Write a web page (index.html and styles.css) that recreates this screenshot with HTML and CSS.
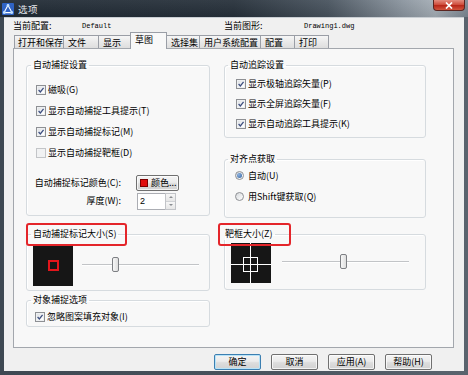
FILE: index.html
```html
<!DOCTYPE html>
<html lang="zh-CN">
<head>
<meta charset="utf-8">
<title>选项</title>
<link rel="stylesheet" href="styles.css">
</head>
<body>
<div class="window">
  <div class="titlebar">
    <svg class="app-icon" width="12" height="12" viewBox="0 0 12 12">
      <rect x="0" y="0" width="12" height="12" rx="1" fill="#2f63c4"/>
      <path d="M6 2.2 L10 9.6 L2 9.6 Z" fill="none" stroke="#ffffff" stroke-width="1.1"/>
      <circle cx="6" cy="2.4" r="1.4" fill="#bfe0ff"/>
      <circle cx="2.3" cy="9.5" r="1.4" fill="#bfe0ff"/>
      <circle cx="9.7" cy="9.5" r="1.4" fill="#bfe0ff"/>
    </svg>
    <span class="title">选项</span>
    <span class="spacer"></span>
    <div class="close">
      <svg width="8" height="7" viewBox="0 0 8 7"><path d="M1 0.5 L7 6.5 M7 0.5 L1 6.5" stroke="#ffffff" stroke-width="1.7"/></svg>
    </div>
  </div>
  <div class="client">
    <div class="info">
      <span class="info-label lbl-profile">当前配置:</span>
      <span class="info-value val-profile">Default</span>
      <span class="info-label lbl-drawing">当前图形:</span>
      <span class="info-value">Drawing1.dwg</span>
    </div>
    <div class="tabs">
      <div class="tab tab-open">打开和保存</div>
      <div class="tab tab-file">文件</div>
      <div class="tab tab-display">显示</div>
      <div class="tab tab-draft active">草图</div>
      <div class="tab tab-select">选择集</div>
      <div class="tab tab-user">用户系统配置</div>
      <div class="tab tab-profile">配置</div>
      <div class="tab tab-print">打印</div>
    </div>
    <div class="panel">
      <div class="col col-left">
        <fieldset class="group">
          <legend class="legend-left">自动捕捉设置</legend>
          <div class="snap-body">
            <div class="check-row snap-check"><span class="cb checked"><svg viewBox="0 0 10 10"><path d="M2 5 L4.2 7.4 L8.2 2.4" fill="none" stroke="#3d4f80" stroke-width="1.6"/></svg></span><span>磁吸(G)</span></div>
            <div class="check-row snap-check"><span class="cb checked"><svg viewBox="0 0 10 10"><path d="M2 5 L4.2 7.4 L8.2 2.4" fill="none" stroke="#3d4f80" stroke-width="1.6"/></svg></span><span>显示自动捕捉工具提示(T)</span></div>
            <div class="check-row snap-check"><span class="cb checked"><svg viewBox="0 0 10 10"><path d="M2 5 L4.2 7.4 L8.2 2.4" fill="none" stroke="#3d4f80" stroke-width="1.6"/></svg></span><span>显示自动捕捉标记(M)</span></div>
            <div class="check-row snap-check"><span class="cb disabled"></span><span>显示自动捕捉靶框(D)</span></div>
            <div class="field-row color-row">
              <span class="field-label">自动捕捉标记颜色(C):</span>
              <div class="btn color-btn"><span class="swatch"></span><span>颜色...</span></div>
            </div>
            <div class="field-row thick-row">
              <span class="field-label">厚度(W):</span>
              <div class="spin">
                <span class="spin-field">2</span>
                <span class="spin-btns"><span class="spin-up"></span><span class="spin-down"></span></span>
              </div>
            </div>
          </div>
        </fieldset>
        <fieldset class="group group-marker">
          <legend class="legend-left mark mark-left">自动捕捉标记大小(S)</legend>
          <div class="preview-row marker-row">
            <svg class="preview" width="40" height="40" viewBox="0 0 40 40">
              <rect width="40" height="40" fill="#161616"/>
              <rect x="16" y="15" width="9" height="9" fill="none" stroke="#e2151b" stroke-width="2"/>
            </svg>
            <div class="slider slider-marker"><span class="thumb"></span></div>
          </div>
        </fieldset>
        <fieldset class="group group-options">
          <legend class="legend-left">对象捕捉选项</legend>
          <div class="options-body">
            <div class="check-row opt-check"><span class="cb checked"><svg viewBox="0 0 10 10"><path d="M2 5 L4.2 7.4 L8.2 2.4" fill="none" stroke="#3d4f80" stroke-width="1.6"/></svg></span><span>忽略图案填充对象(I)</span></div>
          </div>
        </fieldset>
      </div>
      <div class="col col-right">
        <fieldset class="group">
          <legend class="legend-right">自动追踪设置</legend>
          <div class="track-body">
            <div class="check-row track-check"><span class="cb checked"><svg viewBox="0 0 10 10"><path d="M2 5 L4.2 7.4 L8.2 2.4" fill="none" stroke="#3d4f80" stroke-width="1.6"/></svg></span><span>显示极轴追踪矢量(P)</span></div>
            <div class="check-row track-check"><span class="cb checked"><svg viewBox="0 0 10 10"><path d="M2 5 L4.2 7.4 L8.2 2.4" fill="none" stroke="#3d4f80" stroke-width="1.6"/></svg></span><span>显示全屏追踪矢量(F)</span></div>
            <div class="check-row track-check"><span class="cb checked"><svg viewBox="0 0 10 10"><path d="M2 5 L4.2 7.4 L8.2 2.4" fill="none" stroke="#3d4f80" stroke-width="1.6"/></svg></span><span>显示自动追踪工具提示(K)</span></div>
          </div>
        </fieldset>
        <fieldset class="group group-align">
          <legend class="legend-right">对齐点获取</legend>
          <div class="align-body">
            <div class="radio-row"><span class="radio on"></span><span>自动(U)</span></div>
            <div class="radio-row"><span class="radio"></span><span>用Shift键获取(Q)</span></div>
          </div>
        </fieldset>
        <fieldset class="group group-aperture">
          <legend class="legend-aperture mark mark-right">靶框大小(Z)</legend>
          <div class="preview-row aperture-row">
            <svg class="preview" width="40" height="40" viewBox="0 0 40 40">
              <rect width="40" height="40" fill="#161616"/>
              <path d="M19.5 0 V40 M0 21.5 H40" stroke="#ffffff" stroke-width="1"/>
              <rect x="12.5" y="14.5" width="14" height="14" fill="none" stroke="#ffffff" stroke-width="1"/>
            </svg>
            <div class="slider slider-aperture"><span class="thumb"></span></div>
          </div>
        </fieldset>
      </div>
    </div>
    <div class="buttons">
      <div class="btn dlg-btn default">确定</div>
      <div class="btn dlg-btn">取消</div>
      <div class="btn dlg-btn">应用(A)</div>
      <div class="btn dlg-btn">帮助(H)</div>
    </div>
  </div>
</div>
</body>
</html>
```

FILE: styles.css
```css
* { box-sizing: border-box; }
html, body { margin: 0; padding: 0; }
body {
  width: 468px;
  height: 375px;
  overflow: hidden;
  font-family: "Noto Sans CJK SC", "Noto Sans CJK JP", sans-serif;
  font-size: 9px;
  line-height: 12px;
  color: #000;
  background: #48525c;
}
.window {
  width: 468px;
  height: 375px;
  display: flex;
  flex-direction: column;
  padding: 0 4px 4px;
  background: linear-gradient(to right, #3e4852, #4a545e 60%, #5a646e);
}
.titlebar {
  height: 17px;
  margin: 0 -4px;
  display: flex;
  align-items: center;
  padding-left: 2px;
  background:
    linear-gradient(to bottom, rgba(255,255,255,0.06), rgba(0,0,0,0.08)),
    linear-gradient(to right, #212b35 0%, #27313b 50%, #48535e 70%, #8a949e 86%, #a5aeb6 93%, #7c8792 100%);
}
.app-icon { display: block; flex: none; }
.title {
  margin-left: 4px;
  font-size: 9.5px;
  color: #e3e6ea;
  letter-spacing: 0.5px;
}
.spacer { flex: 1; }
.close {
  align-self: flex-start;
  width: 32px;
  height: 11px;
  margin-right: 3px;
  display: flex;
  align-items: center;
  justify-content: center;
  border: 1px solid #5a2520;
  border-top: none;
  border-radius: 0 0 4px 4px;
  background: linear-gradient(to bottom, #e38c7f, #cf4f3e 45%, #b8281a 55%, #d2553e);
}
.close svg { display: block; }

.client {
  flex: 1;
  display: flex;
  flex-direction: column;
  background: #f0f0f0;
  border-top: 1px solid #c9ced3;
}
.info {
  height: 14px;
  margin-top: 1px;
  padding-left: 9px;
  display: flex;
  align-items: center;
}
.info-label { line-height: 14px; }
.lbl-profile { width: 69px; }
.lbl-drawing { width: 80px; }
.info-value {
  font-family: "Liberation Mono", "DejaVu Sans Mono", monospace;
  font-size: 7px;
  line-height: 14px;
}
.val-profile { width: 142px; }

.tabs {
  height: 15px;
  margin-left: 10px;
  display: flex;
  align-items: flex-end;
}
.tab {
  height: 13px;
  padding: 0 0 0 4px;
  line-height: 13px;
  border: 1px solid #9a9ea6;
  border-bottom: none;
  margin-left: -1px;
  background: linear-gradient(to bottom, #f6f6f6, #e9e9e9 50%, #dedede);
  white-space: nowrap;
}
.tab:first-child { margin-left: 0; }
.tab-open { width: 50px; padding-left: 3px; }
.tab-file { width: 36px; }
.tab-display { width: 34px; }
.tab-draft { width: 37px; }
.tab-select { width: 34px; }
.tab-user { width: 62px; }
.tab-profile { width: 35px; }
.tab-print { width: 35px; }
.tab.active {
  height: 17px;
  margin-bottom: -1px;
  line-height: 13px;
  background: #f8f8f8;
  position: relative;
  z-index: 1;
  margin-left: -2px;
  margin-right: -1px;
}
.tab.active + .tab { margin-left: 0; }

.panel {
  width: 441px;
  height: 300px;
  margin-left: 9px;
  border: 1px solid #a3a7ad;
  background: #f8f8f8;
  display: flex;
  gap: 14px;
  padding: 10px 0 0 12px;
}
.col { display: flex; flex-direction: column; }
.col-left { width: 184px; }
.col-right { width: 202px; }

.group {
  margin: 0;
  padding: 0;
  min-width: 0;
  border: 1px solid #d6dbdf;
  border-radius: 3px;
  box-shadow: inset 1px 1px 0 #ffffff;
}
.group legend {
  padding: 0 2px;
  line-height: 12px;
}
.legend-left { margin-left: 4px; }
.legend-right { margin-left: 3px; }
.legend-aperture { margin-left: -2px; }
.mark { position: relative; }
.mark::after {
  content: "";
  position: absolute;
  top: -5px;
  bottom: -6px;
  border: 2px solid #e4252a;
  border-radius: 3px;
}
.mark-left::after { left: -5px; right: -9px; }
.mark-right::after { left: -5px; right: -16px; }

.check-row {
  display: flex;
  align-items: center;
  gap: 2px;
  white-space: nowrap;
}
.cb {
  width: 10px;
  height: 10px;
  flex: none;
  border: 1px solid #8e9094;
  background: linear-gradient(135deg, #d9dcdf, #ffffff 80%);
  box-shadow: inset 0 0 0 1px #eef0f2;
  display: flex;
  align-items: center;
  justify-content: center;
}
.cb svg { width: 8px; height: 8px; display: block; }
.cb.disabled {
  border-color: #c3c5c8;
  background: #f1f2f3;
  box-shadow: none;
}

.snap-body { padding: 8px 0 6px 0; }
.snap-check { height: 21px; padding-left: 9px; }
.field-row {
  height: 16px;
  display: flex;
  align-items: center;
}
.color-row { margin-top: 12px; }
.thick-row { margin-top: 2px; }
.field-label {
  width: 94px;
  text-align: right;
  white-space: nowrap;
}
.btn {
  border: 1px solid #707070;
  border-radius: 2px;
  background: linear-gradient(to bottom, #f4f4f4, #ebebeb 45%, #dddddd 55%, #d2d2d2);
  box-shadow: inset 0 0 0 1px rgba(255,255,255,0.7);
  display: flex;
  align-items: center;
  justify-content: center;
  white-space: nowrap;
}
.color-btn {
  width: 43px;
  height: 16px;
  margin-left: 15px;
  justify-content: flex-start;
  padding-left: 3px;
  gap: 3px;
}
.swatch {
  width: 8px;
  height: 8px;
  background: #e00d0d;
  border: 1px solid #7a0000;
}
.spin {
  margin-left: 16px;
  display: flex;
  height: 17px;
}
.spin-field {
  width: 28px;
  height: 17px;
  border: 1px solid #abadb3;
  border-right: none;
  background: #ffffff;
  padding-left: 2px;
  line-height: 15px;
  font-family: "Liberation Sans", sans-serif;
}
.spin-btns {
  width: 11px;
  display: flex;
  flex-direction: column;
  border: 1px solid #c2c4c8;
  background: #f3f3f3;
}
.spin-up, .spin-down {
  flex: 1;
  display: flex;
  align-items: center;
  justify-content: center;
  background: linear-gradient(to bottom, #f7f7f7, #e6e6e6);
}
.spin-up { border-bottom: 1px solid #d0d2d5; }
.spin-up::before {
  content: "";
  border-left: 2px solid transparent;
  border-right: 2px solid transparent;
  border-bottom: 2px solid #8a8d92;
}
.spin-down::before {
  content: "";
  border-left: 2px solid transparent;
  border-right: 2px solid transparent;
  border-top: 2px solid #8a8d92;
}

.group-marker { margin-top: 12px; }
.preview-row {
  display: flex;
  align-items: center;
}
.preview { display: block; flex: none; }
.marker-row { padding: 6px 0 4px 6px; }
.slider {
  height: 16px;
  margin-bottom: 3px;
  display: flex;
  align-items: center;
  background: linear-gradient(to bottom, transparent 7px, #c2c4c7 7px, #c2c4c7 8px, #ffffff 8px, #ffffff 9px, transparent 9px);
}
.slider-marker { width: 117px; margin-left: 9px; }
.slider-aperture { width: 127px; margin-left: 11px; }
.thumb {
  width: 7px;
  height: 15px;
  border: 1px solid #7d7f83;
  border-radius: 2px;
  background: linear-gradient(to right, #f7f7f7, #dedede);
}
.slider-marker .thumb { margin-left: 30px; }
.slider-aperture .thumb { margin-left: 58px; }

.group-options { margin-top: 3px; }
.options-body { padding: 4px 0 2px 8px; }
.opt-check { height: 14px; }

.track-body { padding: 3px 0 3px 11px; }
.track-check { height: 20px; }
.group-align { margin-top: 15px; }
.align-body { padding: 0 0 10px 10px; }
.radio-row {
  height: 21px;
  display: flex;
  align-items: center;
  gap: 4px;
  white-space: nowrap;
}
.radio {
  width: 9px;
  height: 9px;
  border-radius: 50%;
  border: 1px solid #8e9094;
  background: linear-gradient(135deg, #d6d9dc, #ffffff);
  display: flex;
  align-items: center;
  justify-content: center;
}
.radio.on::before {
  content: "";
  width: 5px;
  height: 5px;
  border-radius: 50%;
  background: radial-gradient(circle at 35% 35%, #8fb4e0, #2f5f9e);
}
.group-aperture { margin-top: 10px; }
.aperture-row { padding: 3px 0 6px 6px; }

.buttons {
  height: 16px;
  margin-top: 6px;
  padding-right: 32px;
  display: flex;
  justify-content: flex-end;
  gap: 10px;
}
.dlg-btn {
  width: 47px;
  height: 16px;
}
.dlg-btn.default {
  border-color: #3c7fb1;
  box-shadow: inset 0 0 0 1px #b7e3f8;
}
```
